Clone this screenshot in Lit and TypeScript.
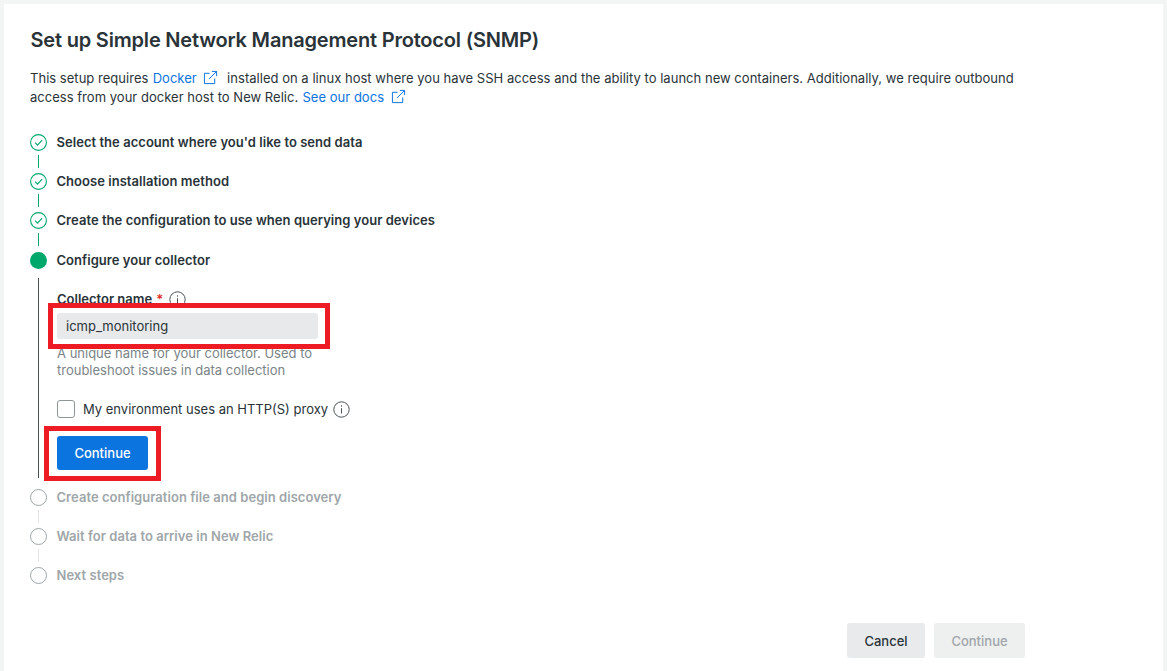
import { LitElement, html, css, svg } from "lit";
import { customElement } from "lit/decorators.js";

const ext = html`<svg class="ext" viewBox="0 0 16 16" width="15" height="15" fill="none" stroke="currentColor" stroke-width="1.05"><path d="M12.5 9v5.5h-11v-11H7"/><path d="M9.5 1.5h5v5"/><path d="M14.5 1.5L6.5 9.5"/></svg>`;
const info = html`<svg class="info" viewBox="0 0 17 17" width="17" height="17" fill="none" stroke="#4a5256" stroke-width="1"><circle cx="8.5" cy="8.5" r="7.7"/><path d="M8.5 7.2v5.3" /><path d="M8.5 4.3v1.4"/></svg>`;
const check = svg`<circle cx="8.5" cy="8.5" r="7.9" fill="none" stroke="#00a86b" stroke-width="1.1"/><path d="M5.1 8.7l2.4 2.4 4.6-5" fill="none" stroke="#00a86b" stroke-width="1.1"/>`;

@customElement("app-root")
export class AppRoot extends LitElement {
  static styles = css`
    :host { display: block; height: 671px; box-sizing: border-box; background: #f3f4f4; padding: 4px 4px 0; font-family: Inter, "Liberation Sans", sans-serif; color: #293338; font-size: 13px; overflow: hidden; }
    .card { position: relative; background: #fff; height: 667px; box-sizing: border-box; padding: 24px 26px 0; display: flex; flex-direction: column; }
    h1 { margin: 0 0 0 0.5px; font-size: 20px; line-height: 24px; font-weight: 600; color: #293338; letter-spacing: -0.19px; }
    .intro { margin: 17px 0 0; line-height: 19px; max-width: 1000px; color: #293338; letter-spacing: 0.025px; }
    .intro a { color: #0c74df; text-decoration: none; margin-left: 0.6px; }
    .ext { color: #0c74df; vertical-align: -2px; margin: 0 0 0 3px; }
    .gap { margin-right: 5px; }
    .steps { margin-top: 25px; display: flex; flex-direction: column; }
    .step { display: flex; align-items: center; gap: 9.5px; height: 20px; font-weight: 600; line-height: 20px; letter-spacing: 0.04px; }
    .step svg { flex: none; }
    .conn { width: 1px; height: 13px; margin: 3px 0 3px 8px; background: #00a86b; }
    .conn.last { margin-bottom: 4px; }
    .conn.off { background: #e3e4e4; }
    .dot { width: 17px; height: 17px; border-radius: 50%; background: #00a86b; flex: none; }
    .open { width: 17px; height: 17px; box-sizing: border-box; border: 1px solid #9ea5a9; border-radius: 50%; flex: none; }
    .off-step { color: #a0a6a9; }
    .panel { margin: 8px 0 9px 8px; border-left: 1px solid #4a5256; padding: 13px 0 0 18px; height: 200px; box-sizing: border-box; }
    .label { display: flex; align-items: center; font-weight: 600; line-height: 16px; height: 16px; }
    .star { color: #df2d24; margin: 0 6px 0 4px; }
    .input { margin-top: 6px; width: 261px; height: 26px; background: #e8e9ea; border-radius: 3px; padding-left: 9px; box-sizing: border-box; line-height: 26px; color: #293338; }
    .hint { margin-top: 6px; width: 270px; color: #7b8488; line-height: 17px; }
    .cb { display: flex; align-items: center; margin-top: 20px; height: 20px; }
    .box { width: 16px; height: 16px; border: 1px solid #8e9599; border-radius: 3px; margin-right: 8px; flex: none; }
    .cb .info { margin-left: 5px; }
    .btn { display: flex; align-items: center; justify-content: center; border-radius: 3px; box-sizing: border-box; height: 35px; font-weight: 500; font-size: 13px; }
    .primary { margin-top: 17px; width: 91px; height: 34px; background: #0c74df; color: #fff; }
    .footer { position: absolute; right: 138px; top: 619px; display: flex; gap: 9px; }
    .cancel { width: 78px; background: #e8eaec; color: #293338; }
    .disabled { width: 91px; background: #eeefef; color: #a0a6a9; }
    .mark { position: absolute; border: 5px solid #ed1c24; box-sizing: border-box; pointer-events: none; }
    .m1 { left: 44px; top: 299px; width: 282px; height: 46px; }
    .m2 { left: 40px; top: 422px; width: 117px; height: 55px; }
  `;

  private done(t: string) {
    return html`<div class="step"><svg width="17" height="17" viewBox="0 0 17 17">${check}</svg>${t}</div>`;
  }
  private off(t: string) {
    return html`<div class="step off-step"><span class="open"></span>${t}</div>`;
  }

  render() {
    return html`<div class="card">
      <h1>Set up Simple Network Management Protocol (SNMP)</h1>
      <p class="intro">This setup requires <a href="#">Docker ${ext}</a><span class="gap"></span> installed on a linux host where you have SSH access and the ability to launch new containers. Additionally, we require outbound access from your docker host to New Relic. <a href="#">See our docs ${ext}</a></p>
      <div class="steps">
        ${this.done("Select the account where you'd like to send data")}
        <div class="conn"></div>
        ${this.done("Choose installation method")}
        <div class="conn"></div>
        ${this.done("Create the configuration to use when querying your devices")}
        <div class="conn last"></div>
        <div class="step"><span class="dot"></span>Configure your collector</div>
        <div class="panel">
          <div class="label">Collector name <span class="star">*</span>${info}</div>
          <div class="input">icmp_monitoring</div>
          <div class="hint">A unique name for your collector. Used to troubleshoot issues in data collection</div>
          <div class="cb"><span class="box"></span>My environment uses an HTTP(S) proxy ${info}</div>
          <div class="btn primary">Continue</div>
        </div>
        ${this.off("Create configuration file and begin discovery")}
        <div class="conn off"></div>
        ${this.off("Wait for data to arrive in New Relic")}
        <div class="conn off"></div>
        ${this.off("Next steps")}
      </div>
      <div class="footer">
        <div class="btn cancel">Cancel</div>
        <div class="btn disabled">Continue</div>
      </div>
      <div class="mark m1"></div>
      <div class="mark m2"></div>
    </div>`;
  }
}
